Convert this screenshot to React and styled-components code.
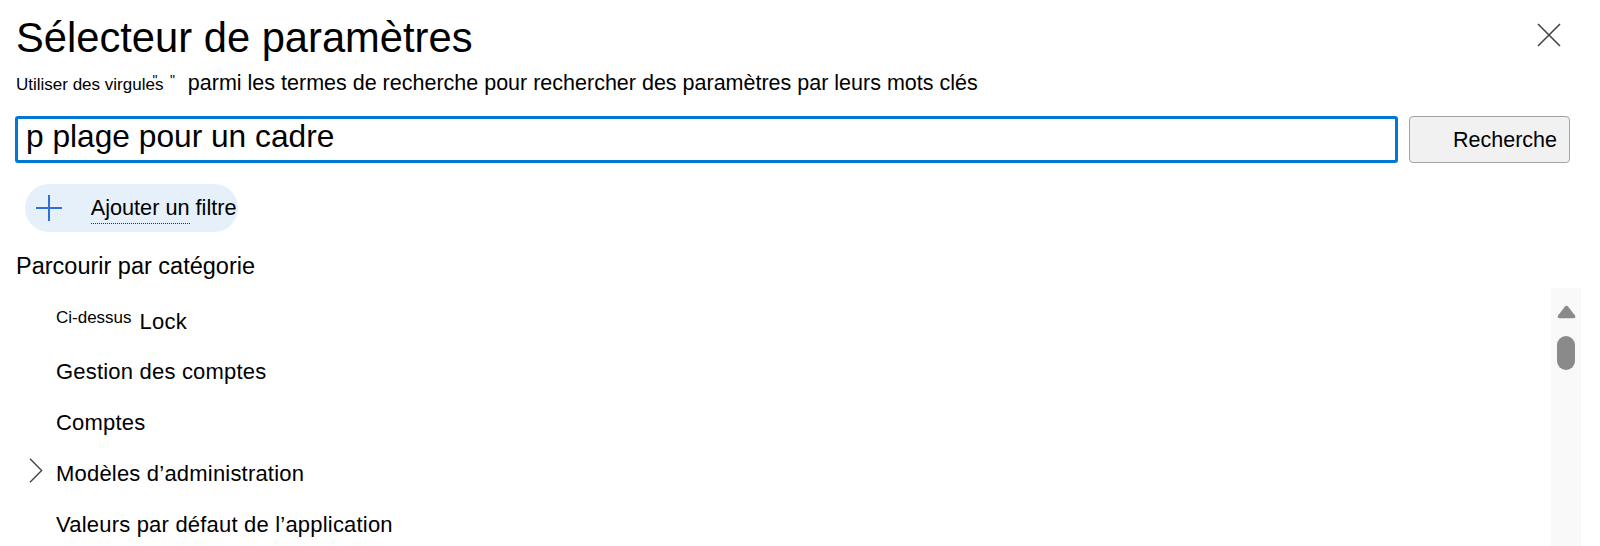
import React from "react";
import styled, { createGlobalStyle } from "styled-components";

const GlobalStyle = createGlobalStyle`
  html, body {
    margin: 0;
    padding: 0;
    height: 546px;
    overflow: hidden;
    background: #ffffff;
  }
  body {
    font-family: "Liberation Sans", Arial, sans-serif;
    color: #000;
  }
  * { box-sizing: border-box; }
`;

const Panel = styled.div`
  display: flex;
  flex-direction: column;
  height: 546px;
  padding: 0 19px 0 16px;
  overflow: hidden;
`;

const Header = styled.div`
  display: flex;
  justify-content: space-between;
  align-items: flex-start;
`;

const Title = styled.h1`
  margin: 14px 0 0;
  font-size: 41.7px;
  font-weight: 400;
  line-height: 48px;
`;

const CloseButton = styled.button`
  width: 24px;
  height: 24px;
  margin: 23px 20px 0 0;
  padding: 0;
  border: none;
  background: none;
  display: flex;
`;

const Hint = styled.p`
  margin: 8px 0 0;
  font-size: 21.5px;
  line-height: 26px;
`;

const HintSmall = styled.span`
  font-size: 17px;
  line-height: 1;
`;

const Quotes = styled.span`
  display: inline-flex;
  gap: 12.5px;
  margin: 0 13px 0 -11px;
  font-size: 14px;
  line-height: 1;
  vertical-align: 5px;
`;

const SearchRow = styled.div`
  display: flex;
  gap: 11px;
  margin: 19.5px 11px 0 -1px;
`;

const SearchInput = styled.input`
  flex: 1;
  min-width: 0;
  height: 47px;
  border: 3px solid #0078d4;
  border-radius: 3px;
  padding: 0 8px 5px;
  font-family: "Liberation Sans", Arial, sans-serif;
  font-size: 31.7px;
  color: #000;
  outline: none;
  background: #fff;
`;

const SearchButton = styled.button`
  width: 161px;
  height: 47px;
  border: 1.5px solid #a3a3a3;
  border-radius: 4px;
  background: #f1f1f1;
  font-family: "Liberation Sans", Arial, sans-serif;
  font-size: 21.5px;
  color: #000;
  text-align: right;
  padding: 2px 12px 0 0;
`;

const FilterPill = styled.button`
  display: inline-flex;
  align-items: center;
  align-self: flex-start;
  gap: 28.7px;
  height: 48px;
  margin: 21px 0 0 9px;
  padding: 0 1px 0 11px;
  border: none;
  border-radius: 24px;
  background: #e5f0fa;
  font-family: "Liberation Sans", Arial, sans-serif;
  font-size: 21.7px;
  color: #000;
`;

const Dotted = styled.span`
  border-bottom: 1.5px dotted #333;
  padding-bottom: 3px;
`;

const Heading = styled.h2`
  margin: 20px 0 0;
  font-size: 23.5px;
  font-weight: 400;
  line-height: 28px;
`;

const ListArea = styled.div`
  display: flex;
  flex: 1;
  min-height: 0;
  margin-top: 8.7px;
`;

const Rows = styled.ul`
  flex: 1;
  margin: 0;
  padding: 7.7px 0 0;
  list-style: none;
`;

const Row = styled.li`
  display: flex;
  align-items: center;
  height: 51px;
  font-size: 22px;
  letter-spacing: 0.2px;
`;

const ChevronSlot = styled.span`
  width: 40px;
  flex: none;
  display: flex;
  align-items: center;
  padding-left: 13px;
  margin-bottom: 8px;
`;

const Prefix = styled.span`
  font-size: 17px;
  letter-spacing: 0;
  vertical-align: 5.6px;
  margin-right: 8px;
`;

const Scrollbar = styled.div`
  width: 30px;
  flex: none;
  background: #f9f9f9;
  display: flex;
  flex-direction: column;
  align-items: center;
  padding-top: 17px;
  gap: 17px;
`;

const Thumb = styled.div`
  width: 18px;
  height: 34px;
  border-radius: 9px;
  background: #8a8a8a;
`;

const CloseIcon = () => (
  <svg width="24" height="24" viewBox="0 0 24 24">
    <path d="M1 1 L23 23 M23 1 L1 23" stroke="#444" strokeWidth="1.6" fill="none" />
  </svg>
);

const PlusIcon = () => (
  <svg width="26" height="26" viewBox="0 0 26 26">
    <path d="M13 0 V26 M0 13 H26" stroke="#2f6fd8" strokeWidth="2" fill="none" />
  </svg>
);

const Chevron = () => (
  <svg width="14" height="25" viewBox="0 0 14 25">
    <path d="M1 0.8 L12.6 12.5 L1 24.2" stroke="#444" strokeWidth="1.4" fill="none" />
  </svg>
);

const UpArrow = () => (
  <svg width="19" height="14" viewBox="0 0 19 14">
    <path
      d="M8 1.6 Q9.5 0 11 1.6 L18 10.5 Q19 13.3 16.5 13.3 L2.5 13.3 Q0 13.3 1 10.5 Z"
      fill="#8a8a8a"
    />
  </svg>
);

const categories = [
  { label: "Lock", prefix: "Ci-dessus" },
  { label: "Gestion des comptes" },
  { label: "Comptes" },
  { label: "Modèles d’administration", expandable: true },
  { label: "Valeurs par défaut de l’application" },
];

export default function App() {
  return (
    <>
      <GlobalStyle />
      <Panel>
        <Header>
          <Title>Sélecteur de paramètres</Title>
          <CloseButton aria-label="Fermer">
            <CloseIcon />
          </CloseButton>
        </Header>
        <Hint>
          <HintSmall>Utiliser des virgules</HintSmall>
          <Quotes>
            <span>"</span>
            <span>"</span>
          </Quotes>
          parmi les termes de recherche pour rechercher des paramètres par leurs mots clés
        </Hint>
        <SearchRow>
          <SearchInput readOnly value="p plage pour un cadre" />
          <SearchButton>Recherche</SearchButton>
        </SearchRow>
        <FilterPill>
          <PlusIcon />
          <span>
            <Dotted>Ajouter un</Dotted> filtre
          </span>
        </FilterPill>
        <Heading>Parcourir par catégorie</Heading>
        <ListArea>
          <Rows>
            {categories.map((c) => (
              <Row key={c.label}>
                <ChevronSlot>{c.expandable && <Chevron />}</ChevronSlot>
                <span>
                  {c.prefix && <Prefix>{c.prefix}</Prefix>}
                  {c.label}
                </span>
              </Row>
            ))}
          </Rows>
          <Scrollbar>
            <UpArrow />
            <Thumb />
          </Scrollbar>
        </ListArea>
      </Panel>
    </>
  );
}
